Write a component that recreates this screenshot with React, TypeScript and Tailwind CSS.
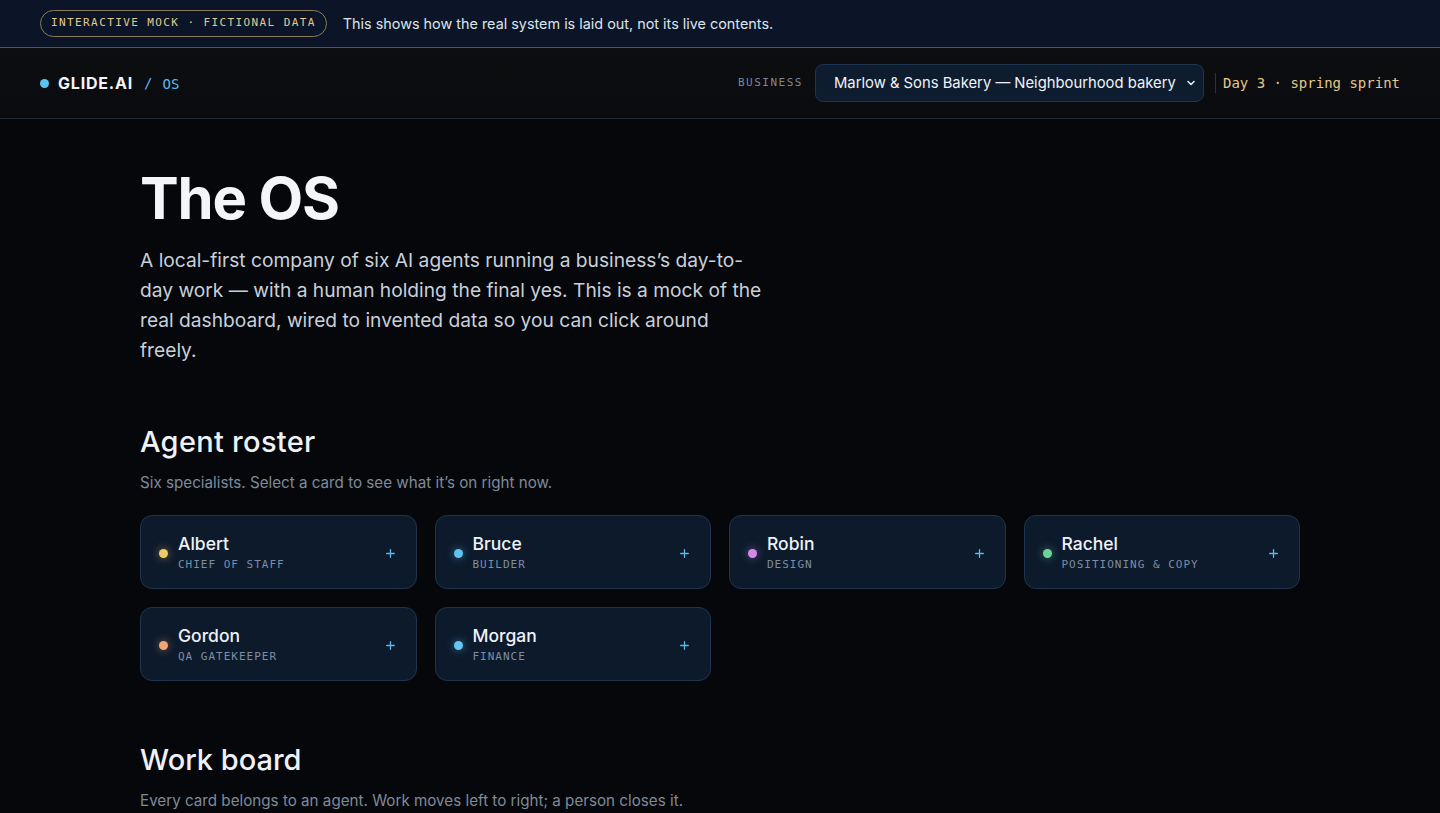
import { Plus } from "lucide-react";

const agents = [
  { name: "Albert", role: "Chief of staff", dot: "bg-[#f0c96a] shadow-[0_0_8px_#f0c96a88]" },
  { name: "Bruce", role: "Builder", dot: "bg-[#5cc3f2] shadow-[0_0_8px_#5cc3f288]" },
  { name: "Robin", role: "Design", dot: "bg-[#d48be8] shadow-[0_0_8px_#d48be888]" },
  { name: "Rachel", role: "Positioning & copy", dot: "bg-[#6fd49b] shadow-[0_0_8px_#6fd49b88]" },
  { name: "Gordon", role: "QA gatekeeper", dot: "bg-[#f2a474] shadow-[0_0_8px_#f2a47488]" },
  { name: "Morgan", role: "Finance", dot: "bg-[#62c6f7] shadow-[0_0_8px_#62c6f788]" },
];

const mono = "font-['DejaVu_Sans_Mono',monospace]";
const head = "font-['Inter','Noto_Sans',sans-serif]";

function AgentCard({ name, role, dot }: { name: string; role: string; dot: string }) {
  return (
    <button className="flex h-[74px] items-center rounded-xl border border-[#1f344c] bg-[#0d1a2c] pl-[18px] pr-[19px] pt-[3px] text-left">
      <span className={`mr-[10px] h-[9px] w-[9px] rounded-full ${dot}`} />
      <div className="flex-1">
        <div className="text-[17.5px] font-medium leading-[22px] text-[#eef2f7]">{name}</div>
        <div className={`${mono} mt-[2px] text-[11px] uppercase tracking-[1px] text-[#7d8ea3]`}>{role}</div>
      </div>
      <Plus className="h-[13px] w-[13px] text-[#5bb9ea]" strokeWidth={2.4} />
    </button>
  );
}

export default function App() {
  return (
    <div className={`min-h-screen bg-[#05070b] ${head} text-white`}>
      {/* notice banner */}
      <div className="flex h-[48px] items-center gap-[16px] border-b border-[#56584c] bg-[#0b1527] px-[40px]">
        <span className={`${mono} rounded-full border border-[#8a7c56] px-[10px] py-[4px] text-[11px] uppercase tracking-[1.4px] text-[#e2c98c]`}>
          Interactive mock · Fictional data
        </span>
        <span className="text-[14.4px] text-[#dde3ec]">This shows how the real system is laid out, not its live contents.</span>
      </div>

      {/* header */}
      <header className="flex h-[71px] items-center border-b border-[#1c2a33] bg-gradient-to-b from-[#0d0e10] to-[#090b0f] pl-[40px] pr-[40px]">
        <span className="mr-[9px] h-[9px] w-[9px] rounded-full bg-[#5cc3f2]" />
        <span className="text-[16px] font-bold tracking-[0.05em] text-[#f2f4f7]">GLIDE.AI</span>
        <span className={`${mono} ml-[11px] text-[14px] text-[#5bb9ea]`}>/</span>
        <span className={`${mono} ml-[10px] mt-[2px] text-[14px] text-[#5bb9ea]`}>OS</span>
        <div className="ml-auto flex items-center">
          <span className={`${mono} mr-[12px] text-[11px] tracking-[1.5px] text-[#7f8896]`}>BUSINESS</span>
          <div className="flex h-[38px] w-[389px] items-center rounded-lg border border-[#1f344d] bg-[#0e1c30] pl-[18px] pr-[6px]">
            <span className="flex-1 text-[14.8px] text-[#f0f3f7]">Marlow &amp; Sons Bakery — Neighbourhood bakery</span>
            <svg viewBox="0 0 24 24" className="h-[12px] w-[12px]" fill="none" stroke="#e5e9ef" strokeWidth={3.2} strokeLinecap="round" strokeLinejoin="round">
              <path d="M6 9l6 6 6-6" />
            </svg>
          </div>
          <span className="ml-[11px] h-[20px] w-px bg-[#2a3440]" />
          <span className={`${mono} ml-[7px] text-[14px] text-[#e2c98c]`}>Day 3 · spring sprint</span>
        </div>
      </header>

      <main className="mx-auto w-[1160px] pt-[41px]">
        <h1 className="text-[58px] font-bold leading-[76px] tracking-[-0.02em] text-[#f3f5f8]">The OS</h1>
        <p className="mt-[9px] w-[630px] text-[19.2px] leading-[30px] text-[#c9d0da]">
          A local-first company of six AI agents running a business’s day-to-day work — with a human holding the final yes. This is a mock of the real dashboard, wired to invented data so you can click around freely.
        </p>

        <h2 className="mt-[59px] text-[29px] font-medium leading-[36px] tracking-[0.01em] text-[#eef1f5]">Agent roster</h2>
        <p className="mt-[12px] text-[15.2px] text-[#7f8a99]">Six specialists. Select a card to see what it’s on right now.</p>
        <div className="mt-[20px] grid w-[1160px] grid-cols-4 gap-[18px]">
          {agents.map((a) => (
            <AgentCard key={a.name} {...a} />
          ))}
        </div>

        <h2 className="mt-[61px] text-[29px] font-medium leading-[36px] text-[#eef1f5]">Work board</h2>
        <p className="mt-[12px] text-[15.2px] text-[#7f8a99]">Every card belongs to an agent. Work moves left to right; a person closes it.</p>
      </main>
    </div>
  );
}
